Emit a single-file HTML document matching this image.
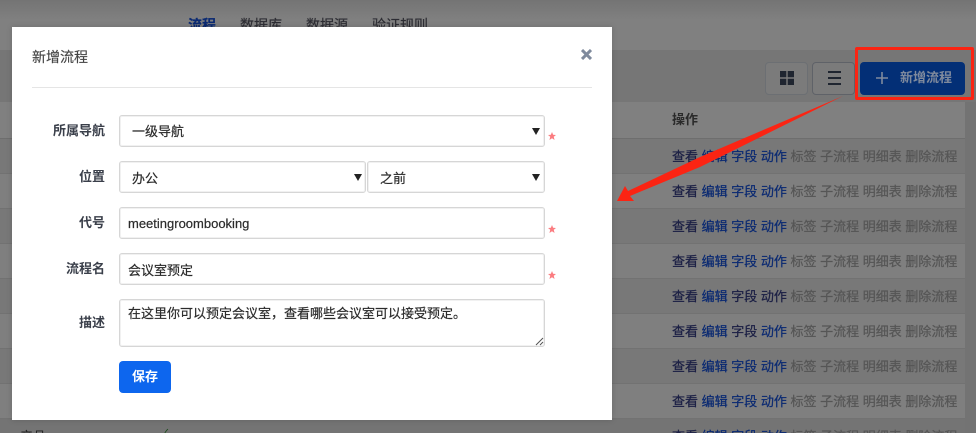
<!DOCTYPE html>
<html lang="zh">
<head>
<meta charset="utf-8">
<style>
*{box-sizing:border-box}
html,body{margin:0;padding:0;width:976px;height:433px;overflow:hidden;background:#7e7e7e;font-family:"Liberation Sans","WenQuanYi Zen Hei","Noto Sans CJK SC",sans-serif;color:#2b2b2b}
.a{position:absolute;white-space:nowrap}
#page{position:absolute;left:0;top:0;width:976px;height:433px;overflow:hidden}
.nav{top:15px;font-size:14px;line-height:20px;color:#2d2d33;-webkit-text-stroke:.2px currentColor}
.toolbar{left:0;top:50px;width:976px;height:52px;background:#767676}
.side{left:965px;top:102px;width:11px;height:331px;background:#737373}
.row{left:0;width:965px;height:35px;border-bottom:1px solid #727272}
.acts{left:672px;font-size:13px;line-height:18px;color:#565656;-webkit-text-stroke:.25px currentColor}
.acts b{font-weight:normal;color:#0b2a72}
.acts i{font-style:normal;color:#1b1f44}
.tb{top:62px;width:43px;height:33px;border-radius:4px;background:#7b7b7b;border:1px solid #6c6f73}
#modal{left:12px;top:27px;width:600px;height:393px;background:#fff;box-shadow:0 0 6px rgba(0,0,0,.15)}
.lbl{right:507px;font-size:13px;font-weight:bold;line-height:18px;color:#3a3f4a}
.ctl{left:107px;width:426px;background:#fff;border:1px solid #d6d6d6;box-shadow:inset 0 0 0 1px #f1f1f1;border-radius:3px;font-size:13px;color:#2b2b2b;-webkit-text-stroke:.2px currentColor}
.txt{position:absolute;left:12px;top:0;white-space:nowrap}
.tri{position:absolute;width:0;height:0;border-left:4px solid transparent;border-right:4px solid transparent;border-top:7px solid #222}
.star{left:536px;width:8px;height:8px}
</style>
</head>
<body>
<div id="page">
  <div class="a" style="left:0;top:0;width:976px;height:50px;background:linear-gradient(#747474,#808080 40%)"></div>
  <div class="a nav" style="left:188px;color:#0b2a72;font-weight:bold">流程</div>
  <div class="a nav" style="left:240px">数据库</div>
  <div class="a nav" style="left:306px">数据源</div>
  <div class="a nav" style="left:372px">验证规则</div>

  <div class="a toolbar"></div>
  <div class="a" style="left:0;top:102px;width:965px;height:37px;background:#808080;border-bottom:1px solid #6e6e6e"></div>
  <div class="a side"></div>
  <div class="a" style="left:672px;top:111px;font-size:13px;font-weight:bold;line-height:18px;color:#2a2a2a">操作</div>

  <div class="a row" style="top:139px;background:#787878"></div>
  <div class="a row" style="top:174px;background:#7f7f7f"></div>
  <div class="a row" style="top:209px;background:#787878"></div>
  <div class="a row" style="top:244px;background:#7f7f7f"></div>
  <div class="a row" style="top:279px;background:#787878"></div>
  <div class="a row" style="top:314px;background:#7f7f7f"></div>
  <div class="a row" style="top:349px;background:#787878"></div>
  <div class="a row" style="top:384px;background:#7f7f7f"></div>
  <div class="a row" style="top:419px;background:#747474"></div>

  <div class="a acts" style="top:148px"><i>查看</i> <b>编辑</b> <b>字段</b> <b>动作</b> 标签 子流程 明细表 删除流程</div>
  <div class="a acts" style="top:183px"><i>查看</i> <b>编辑</b> <b>字段</b> <b>动作</b> 标签 子流程 明细表 删除流程</div>
  <div class="a acts" style="top:218px"><i>查看</i> <b>编辑</b> <b>字段</b> <b>动作</b> 标签 子流程 明细表 删除流程</div>
  <div class="a acts" style="top:253px"><i>查看</i> <b>编辑</b> <b>字段</b> <b>动作</b> 标签 子流程 明细表 删除流程</div>
  <div class="a acts" style="top:288px"><i>查看</i> <b>编辑</b> <i>字段</i> <i>动作</i> 标签 子流程 明细表 删除流程</div>
  <div class="a acts" style="top:323px"><i>查看</i> <b>编辑</b> <i>字段</i> <b>动作</b> 标签 子流程 明细表 删除流程</div>
  <div class="a acts" style="top:358px"><i>查看</i> <b>编辑</b> <b>字段</b> <b>动作</b> 标签 子流程 明细表 删除流程</div>
  <div class="a acts" style="top:393px"><i>查看</i> <b>编辑</b> <b>字段</b> <b>动作</b> 标签 子流程 明细表 删除流程</div>
  <div class="a acts" style="top:428px"><i>查看</i> <b>编辑</b> <b>字段</b> <b>动作</b> 标签 子流程 明细表 删除流程</div>

  <div class="a" style="left:20px;top:428px;font-size:13px;line-height:18px;color:#222">产品</div>
  <div class="a" style="left:160px;top:426px;font-size:12px;line-height:16px;color:#1d4d1d">✓</div>

  <div class="a tb" style="left:765px"></div>
  <svg class="a" style="left:780px;top:71px" width="14" height="14"><path fill="#1f2530" d="M0 0h6.300v6.300H0zM7.700 0h6.300v6.300H7.700zM0 7.700h6.300v6.300H7.700H0zM7.700 7.700h6.300v6.300H7.700z"/></svg>
  <div class="a tb" style="left:812px;border-color:#5f6268"></div>
  <svg class="a" style="left:827px;top:70px" width="15" height="16"><path stroke="#1f2530" stroke-width="2" d="M1 2h13M1 8h13M1 14h13"/></svg>

  <div class="a" style="left:860px;top:62px;width:105px;height:33px;background:#032f76;border-radius:4px"></div>
  <svg class="a" style="left:875px;top:71px" width="14" height="14"><path stroke="#7f8a9d" stroke-width="1.600" d="M7 1v12M1 7h12"/></svg>
  <div class="a" style="left:900px;top:69px;font-size:13px;font-weight:bold;line-height:18px;color:#7f8a9d">新增流程</div>

  <div class="a" style="left:855px;top:47px;width:119px;height:53px;border:3px solid #fb2413;border-radius:2px"></div>

  <svg class="a" style="left:600px;top:90px" width="260" height="130">
    <polygon fill="#fb2413" points="17,111 25,96 28,101 100,67 243,6 100,77 30,106 34,111"/>
  </svg>

  <div id="modal" class="a">
    <div class="a" style="left:20px;top:20px;font-size:14px;line-height:20px;color:#444;-webkit-text-stroke:.15px currentColor">新增流程</div>
    <svg class="a" style="left:569px;top:22px" width="11" height="11"><path stroke="#7f8a9d" stroke-width="3" d="M1 1l9 9M10 1L1 10"/></svg>
    <div class="a" style="left:20px;top:60px;width:560px;height:1px;background:#e5e5e5"></div>

    <div class="a lbl" style="top:95px">所属导航</div>
    <div class="a ctl" style="top:88px;height:32px"><span class="txt" style="top:5px">一级导航</span><span class="tri" style="left:412px;top:12px"></span></div>
    <svg class="a star" style="top:105px" viewBox="0 0 10 10"><polygon fill="#fb7c80" points="5,0 6.400,3.500 10,3.700 7.200,6 8.200,10 5,7.800 1.800,10 2.800,6 0,3.700 3.600,3.500"/></svg>

    <div class="a lbl" style="top:141px">位置</div>
    <div class="a ctl" style="top:134px;height:32px;width:247px"><span class="txt" style="top:6px">办公</span><span class="tri" style="left:234px;top:12px"></span></div>
    <div class="a ctl" style="top:134px;height:32px;left:355px;width:178px"><span class="txt" style="top:6px">之前</span><span class="tri" style="left:164px;top:12px"></span></div>

    <div class="a lbl" style="top:187px">代号</div>
    <div class="a ctl" style="top:180px;height:32px"><span class="txt" style="left:8px;top:8px">meetingroombooking</span></div>
    <svg class="a star" style="top:198px" viewBox="0 0 10 10"><polygon fill="#fb7c80" points="5,0 6.400,3.500 10,3.700 7.200,6 8.200,10 5,7.800 1.800,10 2.800,6 0,3.700 3.600,3.500"/></svg>

    <div class="a lbl" style="top:233px">流程名</div>
    <div class="a ctl" style="top:226px;height:32px"><span class="txt" style="left:8px;top:6px">会议室预定</span></div>
    <svg class="a star" style="top:244px" viewBox="0 0 10 10"><polygon fill="#fb7c80" points="5,0 6.400,3.500 10,3.700 7.200,6 8.200,10 5,7.800 1.800,10 2.800,6 0,3.700 3.600,3.500"/></svg>

    <div class="a lbl" style="top:287px">描述</div>
    <div class="a ctl" style="top:272px;height:48px"><span class="txt" style="left:8px;top:3px">在这里你可以预定会议室，查看哪些会议室可以接受预定。</span>
      <svg style="position:absolute;right:0;bottom:0" width="9" height="9"><path stroke="#555" stroke-width="1" d="M1 8L8 1M5 8L8 5"/></svg>
    </div>

    <div class="a" style="left:107px;top:334px;width:52px;height:32px;background:#0d66ee;border-radius:4px;color:#fff;font-size:13px;font-weight:bold;line-height:31px;text-align:center">保存</div>
  </div>
</div>
</body>
</html>
